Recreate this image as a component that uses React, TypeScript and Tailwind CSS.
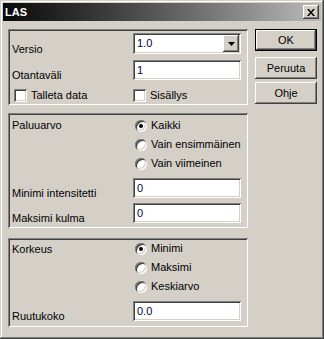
import React from 'react';

const sunken =
  'shadow-[inset_1px_1px_0_#808080,inset_-1px_-1px_0_#ffffff,inset_2px_2px_0_#404040,inset_-2px_-2px_0_#d4d0c8]';
const raised =
  'shadow-[inset_-1px_-1px_0_#404040,inset_1px_1px_0_#ffffff,inset_-2px_-2px_0_#808080,inset_2px_2px_0_#d4d0c8]';

const TextBox: React.FC<{ value: string }> = ({ value }) => (
  <div className={`h-[20px] w-[108px] bg-white ${sunken} flex items-center pl-[4px] text-[#000040]`}>{value}</div>
);

const Select: React.FC<{ value: string }> = ({ value }) => (
  <div className={`h-[21px] w-[108px] bg-white ${sunken} flex items-center justify-between p-[2px] pl-[4px] text-[#000040]`}>
    <span>{value}</span>
    <div className={`w-[16px] h-[17px] bg-[#d4d0c8] ${raised} flex items-center justify-center`}>
      <svg width="7" height="4" viewBox="0 0 7 4">
        <path d="M0 0h7L3.5 4z" fill="#000" />
      </svg>
    </div>
  </div>
);

const Check: React.FC<{ label: string }> = ({ label }) => (
  <div className="flex items-center gap-[4px]">
    <div className={`w-[13px] h-[13px] bg-white ${sunken}`} />
    <span>{label}</span>
  </div>
);

const Radio: React.FC<{ label: string; checked?: boolean }> = ({ label, checked }) => (
  <div className="flex items-center gap-[4px] h-[19px] pl-[2px]">
    <div className={`w-[12px] h-[12px] rounded-full bg-white ${sunken} flex items-center justify-center`}>
      {checked && <div className="w-[4px] h-[4px] rounded-full bg-black" />}
    </div>
    <span>{label}</span>
  </div>
);

const Label: React.FC<{ children: React.ReactNode }> = ({ children }) => (
  <span className="w-[121px] leading-[13px] -mb-[2px]">{children}</span>
);

const Button: React.FC<{ label: string; def?: boolean }> = ({ label, def }) => (
  <div className={`w-[62px] h-[22px] ${def ? 'border border-black' : ''}`}>
    <div className={`w-full h-full bg-[#d4d0c8] ${raised} flex items-center justify-center`}>{label}</div>
  </div>
);

export default function App() {
  return (
    <div
      className="w-[324px] h-[339px] bg-[#d4d0c8] p-[3px] flex flex-col text-[11px] text-black font-['Liberation_Sans',Arial,sans-serif] shadow-[inset_-1px_-1px_0_#404040,inset_1px_1px_0_#d4d0c8,inset_-2px_-2px_0_#808080,inset_2px_2px_0_#ffffff]"
    >
      {/* title bar */}
      <div className="h-[18px] flex items-center justify-between pl-[2px] pr-[2px] bg-linear-to-r from-[#0a0a0a] to-[#bcbcbc]">
        <span className="text-white font-bold text-[11px]">LAS</span>
        <div className={`w-[16px] h-[14px] bg-[#d4d0c8] ${raised} flex items-center justify-center`}>
          <svg width="8" height="7" viewBox="0 0 8 7">
            <path d="M0 0h2l2 2.5L6 0h2L5 3.5 8 7H6L4 4.5 2 7H0l3-3.5z" fill="#000" />
          </svg>
        </div>
      </div>

      <div className="flex pt-[8px] pl-[5px] gap-[7px]">
        {/* left column */}
        <div className="w-[240px] flex flex-col">
          <div className={`h-[76px] ${sunken} pl-[4px] pt-[4px] flex flex-col`}>
            <div className="flex items-end">
              <Label>Versio</Label>
              <Select value="1.0" />
            </div>
            <div className="flex items-end mt-[6px]">
              <Label>Otantaväli</Label>
              <TextBox value="1" />
            </div>
            <div className="flex items-center mt-[7px] pl-[2px]">
              <div className="w-[119px]">
                <Check label="Talleta data" />
              </div>
              <Check label="Sisällys" />
            </div>
          </div>

          <div className={`h-[115px] mt-[8px] ${sunken} pl-[4px] pt-[3px] flex flex-col`}>
            <div className="flex">
              <span className="w-[121px] leading-[19px]">Paluuarvo</span>
              <div className="flex flex-col">
                <Radio label="Kaikki" checked />
                <Radio label="Vain ensimmäinen" />
                <Radio label="Vain viimeinen" />
              </div>
            </div>
            <div className="flex items-end mt-[5px]">
              <Label>Minimi intensitetti</Label>
              <TextBox value="0" />
            </div>
            <div className="flex items-end mt-[5px]">
              <Label>Maksimi kulma</Label>
              <TextBox value="0" />
            </div>
          </div>

          <div className={`h-[89px] mt-[10px] ${sunken} pl-[4px] pt-[1px] flex flex-col`}>
            <div className="flex">
              <span className="w-[121px] leading-[19px] pt-[1px]">Korkeus</span>
              <div className="flex flex-col">
                <Radio label="Minimi" checked />
                <Radio label="Maksimi" />
                <Radio label="Keskiarvo" />
              </div>
            </div>
            <div className="flex items-end mt-[5px]">
              <Label>Ruutukoko</Label>
              <TextBox value="0.0" />
            </div>
          </div>
        </div>

        {/* buttons */}
        <div className="flex flex-col">
          <Button label="OK" def />
          <div className="mt-[6px]">
            <Button label="Peruuta" />
          </div>
          <div className="mt-[3px]">
            <Button label="Ohje" />
          </div>
        </div>
      </div>
    </div>
  );
}
